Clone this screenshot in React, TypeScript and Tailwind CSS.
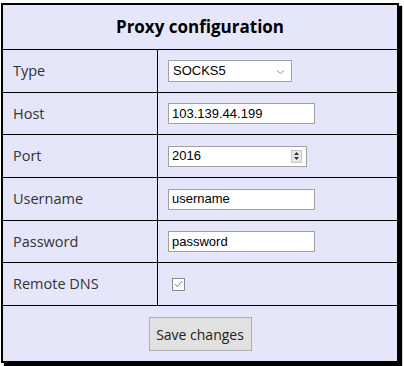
const rows = [
  { label: "Type", h: "h-[43px]", field: "select" },
  { label: "Host", h: "h-[42px]", field: "host" },
  { label: "Port", h: "h-[43px]", field: "port" },
  { label: "Username", h: "h-[43px]", field: "username" },
  { label: "Password", h: "h-[42px]", field: "password" },
  { label: "Remote DNS", h: "h-[43px]", field: "dns" },
];

const inputFont = { fontFamily: '"Liberation Sans", Arial, sans-serif' };

function Field({ kind }: { kind: string }) {
  if (kind === "select") {
    return (
      <div className="flex h-[22px] w-[124px] items-center justify-between border border-[#a0a0a0] bg-white pl-[4px] pr-[6px] text-[13px] text-black" style={inputFont}>
        <span>SOCKS5</span>
        <svg width="9" height="6" viewBox="0 0 9 6" className="mt-[1px]">
          <path d="M1 1.5 L4.5 4.5 L8 1.5" fill="none" stroke="#999" strokeWidth="1" />
        </svg>
      </div>
    );
  }
  if (kind === "port") {
    return (
      <div className="flex h-[21px] w-[139px] items-center justify-between border border-[#a0a0a0] bg-white pl-[3px] pr-[4px] text-[13px] text-black" style={inputFont}>
        <span>2016</span>
        <div className="flex h-[13px] w-[11px] flex-col items-center justify-center gap-[2px] border border-[#c8c8c8] bg-[#e8e8e8]">
          <svg width="5" height="3" viewBox="0 0 5 3"><path d="M0 3 L2.5 0 L5 3 Z" fill="#333" /></svg>
          <svg width="5" height="3" viewBox="0 0 5 3"><path d="M0 0 L2.5 3 L5 0 Z" fill="#333" /></svg>
        </div>
      </div>
    );
  }
  if (kind === "dns") {
    return (
      <div className="ml-[4px] flex h-[13px] w-[13px] items-center justify-center border border-[#8a8a8a] bg-white">
        <svg width="9" height="8" viewBox="0 0 9 8">
          <path d="M1 4.2 L3.4 6.5 L8 1.2" fill="none" stroke="#777" strokeWidth="1" />
        </svg>
      </div>
    );
  }
  const value = kind === "host" ? "103.139.44.199" : kind;
  return (
    <div className="flex h-[21px] w-[147px] items-center border border-[#a0a0a0] bg-white pl-[3px] text-[13px] text-black" style={inputFont}>
      {value}
    </div>
  );
}

export default function App() {
  return (
    <div className="h-[366px] w-[404px] bg-white pl-[1px] pt-[3px]" style={{ fontFamily: '"Open Sans", "Noto Sans", sans-serif' }}>
      <div className="w-[398px] border-2 border-black bg-[#e6e6fa] shadow-[3px_3px_1px_#000]">
        <div className="flex h-[45px] items-center justify-center border-b border-black text-[17px] font-bold text-black">
          Proxy configuration
        </div>
        {rows.map((r) => (
          <div key={r.label} className={`flex border-b border-black ${r.h}`}>
            <div className="flex w-[155px] items-center border-r border-black pl-[10px] text-[14.5px] text-[#333]">
              {r.label}
            </div>
            <div className="flex flex-1 items-center pl-[10px]">
              <Field kind={r.field} />
            </div>
          </div>
        ))}
        <div className="flex h-[55px] items-start justify-center pt-[11px]">
          <button className="h-[34px] w-[103px] border border-[#adadad] bg-[#e1e1e1] text-[14px] text-[#222]">
            Save changes
          </button>
        </div>
      </div>
    </div>
  );
}
